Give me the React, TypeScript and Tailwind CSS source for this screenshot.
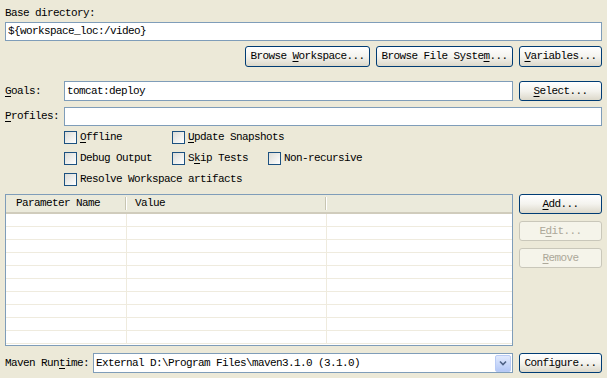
import type { ReactNode } from 'react';

const font = "font-['Liberation_Mono','DejaVu_Sans_Mono',monospace] text-[11px] tracking-[-0.6px] whitespace-nowrap";

const U = ({ children }: { children: ReactNode }) => <span className="underline underline-offset-[2px]">{children}</span>;

function XpButton({ children, disabled = false, className = '' }: { children: ReactNode; disabled?: boolean; className?: string }) {
  return (
    <button
      type="button"
      disabled={disabled}
      className={`flex items-center justify-center rounded-[3px] border leading-none ${
        disabled
          ? 'border-[#C9C7BA] bg-[#F5F4EA] text-[#ACA899]'
          : 'border-[#003C74] bg-gradient-to-b from-white via-[#F4F3EE] to-[#DCD8CA] text-black'
      } ${className}`}
    >
      <span>{children}</span>
    </button>
  );
}

function XpInput({ value = '', className = '' }: { value?: string; className?: string }) {
  return (
    <div className={`flex items-center border border-[#7F9DB9] bg-white px-[2px] text-black ${className}`}>
      <span>{value}</span>
    </div>
  );
}

function XpCheckbox({ children }: { children: ReactNode }) {
  return (
    <label className="flex items-center gap-[3px]">
      <span className="block h-[13px] w-[13px] shrink-0 border border-[#1C5180] bg-gradient-to-br from-[#DCDCD7] to-white" />
      <span>{children}</span>
    </label>
  );
}

const rows = Array.from({ length: 10 });

export default function App() {
  return (
    <div className={`${font} flex h-[378px] w-[607px] flex-col overflow-hidden bg-[#ECE9D8] px-[5px] pt-[6px] text-black`}>
      <div className="h-[14px] leading-[14px]">Base directory:</div>
      <XpInput value="${workspace_loc:/video}" className="mt-[2px] h-[19px]" />

      <div className="mt-[5px] flex justify-end gap-[6px]">
        <XpButton className="h-[21px] w-[125px]">Browse <U>W</U>orkspace...</XpButton>
        <XpButton className="h-[21px] w-[137px]">Browse File Syste<U>m</U>...</XpButton>
        <XpButton className="h-[21px] w-[83px]"><U>V</U>ariables...</XpButton>
      </div>

      <div className="mt-[14px] flex items-center gap-[6px]">
        <div className="w-[53px]"><U>G</U>oals:</div>
        <XpInput value="tomcat:deploy" className="h-[20px] flex-1" />
        <XpButton className="h-[20px] w-[83px]"><U>S</U>elect...</XpButton>
      </div>

      <div className="mt-[6px] flex items-center">
        <div className="w-[59px]"><U>P</U>rofiles:</div>
        <XpInput className="h-[19px] flex-1" />
      </div>

      <div className="ml-[59px] mt-[5px] grid grid-cols-[108px_96px_auto] gap-y-[8px] leading-[13px]">
        <XpCheckbox><U>O</U>ffline</XpCheckbox>
        <XpCheckbox><U>U</U>pdate Snapshots</XpCheckbox>
        <span />
        <XpCheckbox>Debug Output</XpCheckbox>
        <XpCheckbox>S<U>k</U>ip Tests</XpCheckbox>
        <XpCheckbox>Non-recursive</XpCheckbox>
        <div className="col-span-3">
          <XpCheckbox>Resolve Workspace artifacts</XpCheckbox>
        </div>
      </div>

      <div className="mt-[8px] flex gap-[6px]">
        <div className="h-[152px] flex-1 overflow-hidden border border-[#7F9DB9] bg-white">
          <div className="flex h-[19px] items-center border-b-2 border-[#D0CCBC] bg-[#EBEADB]">
            <div className="flex h-full w-[121px] items-center justify-between pl-[10px]">
              <span>Parameter Name</span>
              <span className="h-[13px] w-[2px] border-l border-r border-l-[#C7C5B2] border-r-white" />
            </div>
            <div className="flex h-full w-[200px] items-center justify-between pl-[8px]">
              <span>Value</span>
              <span className="h-[13px] w-[2px] border-l border-r border-l-[#C7C5B2] border-r-white" />
            </div>
          </div>
          {rows.map((_, i) => (
            <div key={i} className="flex h-[13px] border-b border-[#EFEBDE]">
              <div className="w-[121px] border-r border-[#EFEBDE]" />
              <div className="w-[200px] border-r border-[#EFEBDE]" />
            </div>
          ))}
        </div>
        <div className="flex w-[83px] flex-col gap-[7px]">
          <XpButton className="h-[20px]"><U>A</U>dd...</XpButton>
          <XpButton disabled className="h-[20px]">E<U>d</U>it...</XpButton>
          <XpButton disabled className="h-[20px]"><U>R</U>emove</XpButton>
        </div>
      </div>

      <div className="mt-[7px] flex items-center gap-[6px]">
        <div className="w-[82px]">Maven Run<U>t</U>ime:</div>
        <div className="flex h-[20px] flex-1 items-center border border-[#7F9DB9] bg-white pl-[2px]">
          <span className="flex-1">External D:\Program Files\maven3.1.0 (3.1.0)</span>
          <span className="m-px flex h-[17px] w-[16px] items-center justify-center rounded-[2px] border border-[#B9CBF5] bg-gradient-to-b from-[#E1EAFE] to-[#B4C8F6]">
            <svg width="8" height="6" viewBox="0 0 8 6">
              <path d="M1 1.5 L4 4.5 L7 1.5" fill="none" stroke="#4D6185" strokeWidth="1.6" />
            </svg>
          </span>
        </div>
        <XpButton className="h-[20px] w-[83px]">Configure...</XpButton>
      </div>
    </div>
  );
}
